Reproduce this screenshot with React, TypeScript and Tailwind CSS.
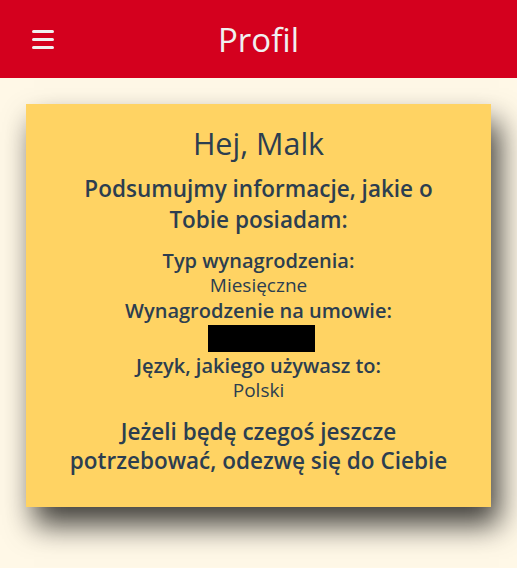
import React from "react";

export default function App() {
  const font = { fontFamily: '"Open Sans", "Noto Sans", sans-serif' };
  return (
    <div className="min-h-[568px] bg-[#FFF8E7]" style={font}>
      <header className="grid h-[78px] grid-cols-[1fr_auto_1fr] items-center bg-[#D4001E]">
        <div className="flex flex-col gap-[5px] pl-[32px]">
          <span className="block h-[3px] w-[22px] rounded-sm bg-[#F0F0F0]" />
          <span className="block h-[3px] w-[22px] rounded-sm bg-[#F0F0F0]" />
          <span className="block h-[3px] w-[22px] rounded-sm bg-[#F0F0F0]" />
        </div>
        <h1 className="text-[33px] leading-none text-[#F0F0F0]">Profil</h1>
        <div />
      </header>
      <main className="px-[26px] pt-[26px]">
        <section className="flex flex-col items-center bg-[#FFD363] px-4 pb-[32px] pt-[19px] text-center text-[#2C3E50] shadow-[8px_18px_28px_rgba(0,0,0,0.75)]">
          <h2 className="text-[30.5px] leading-[40px]">Hej, Malk</h2>
          <h3 className="mt-[10px] text-[22.5px] font-semibold leading-[31px]">
            Podsumujmy informacje, jakie o
            <br />
            Tobie posiadam:
          </h3>
          <div className="mt-[13px] flex flex-col items-center leading-[25px]">
            <p className="text-[20px] font-semibold">Typ wynagrodzenia:</p>
            <p className="text-[19px]">Miesięczne</p>
            <p className="text-[20px] font-semibold">Wynagrodzenie na umowie:</p>
            <div className="mb-[1px] ml-[5px] mt-[2px] h-[27px] w-[107px] bg-black" />
            <p className="text-[20px] font-semibold">Język, jakiego używasz to:</p>
            <p className="text-[19px]">Polski</p>
          </div>
          <p className="mt-[14px] text-[22.5px] font-semibold leading-[29px]">
            Jeżeli będę czegoś jeszcze
            <br />
            potrzebować, odezwę się do Ciebie
          </p>
        </section>
      </main>
    </div>
  );
}
